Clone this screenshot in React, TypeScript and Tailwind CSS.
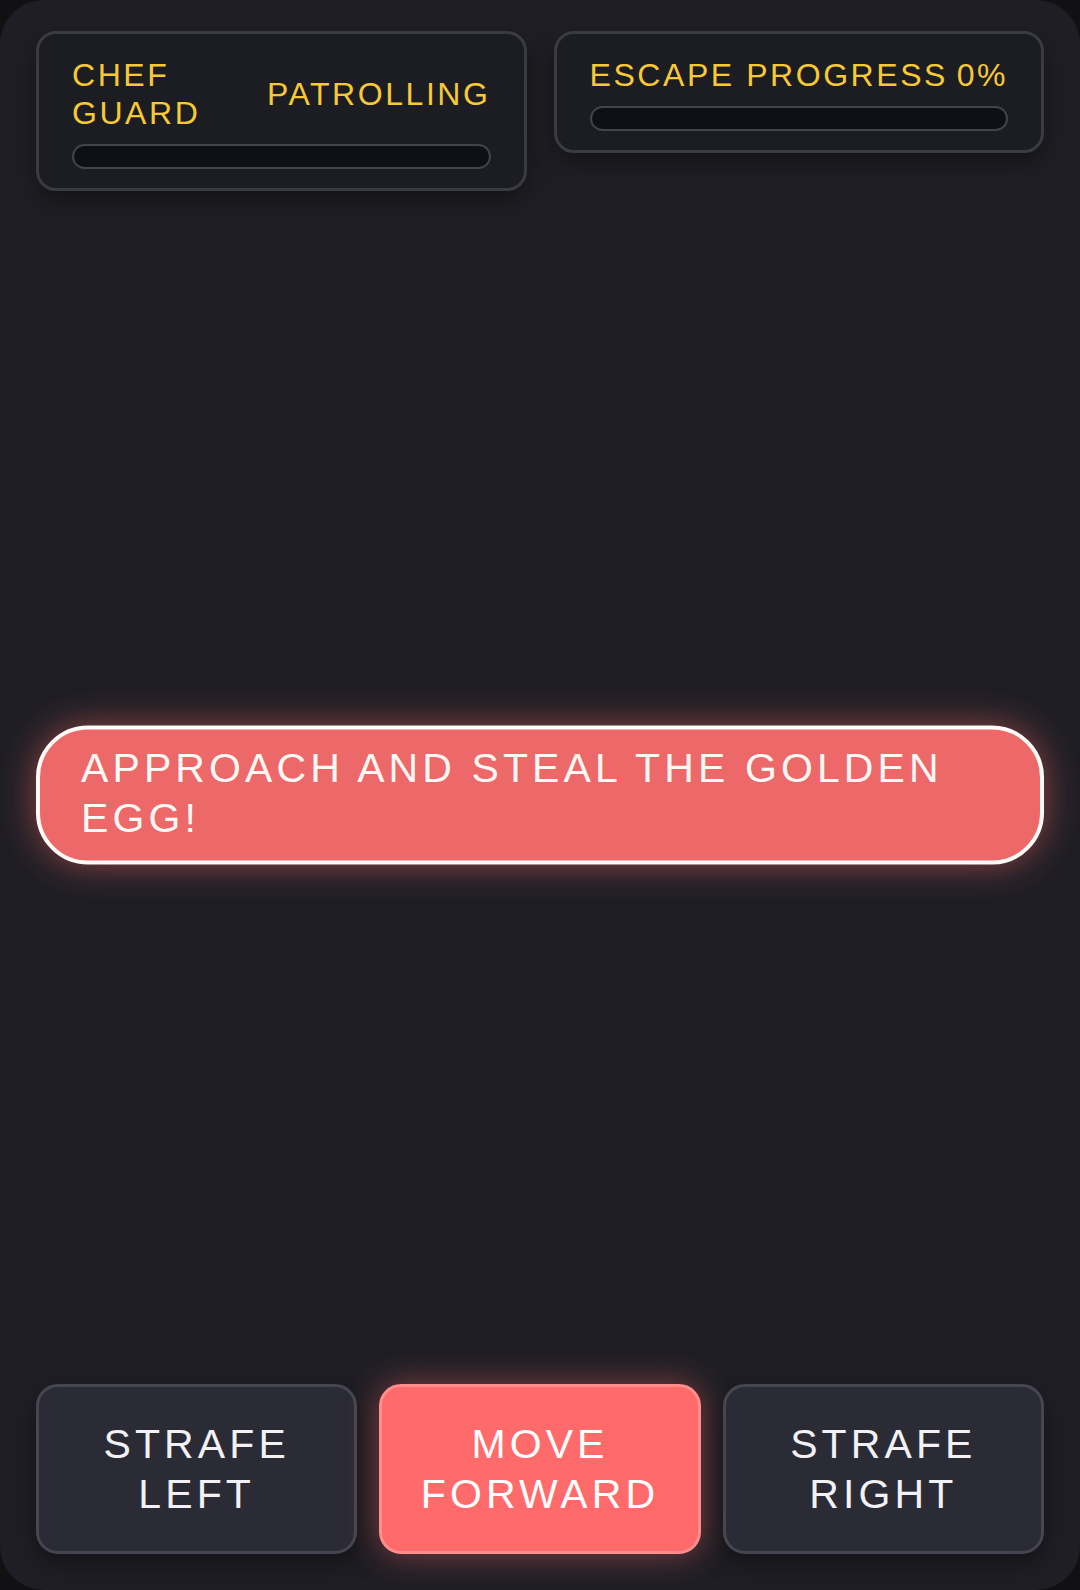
import React from "react";

function Bar() {
  return (
    <div className="h-[25px] w-full rounded-full border-2 border-[#42434c] bg-[#0f1016]" />
  );
}

function ControlButton({ label, active }: { label: string[]; active?: boolean }) {
  return (
    <button
      className={
        active
          ? "flex flex-col items-center justify-center rounded-[22px] border-[3px] border-[#ff8e8c] bg-[#ff6b6b] py-8 text-[41px] leading-[50px] tracking-[0.1em] text-white shadow-[0_0_34px_rgba(255,107,107,0.45)]"
          : "flex flex-col items-center justify-center rounded-[22px] border-[3px] border-[#45464f] bg-[#2a2b35] py-8 text-[41px] leading-[50px] tracking-[0.1em] text-[#f1f1f6] shadow-[0_10px_24px_rgba(0,0,0,0.35)]"
      }
    >
      {label.map((l) => (
        <span key={l}>{l}</span>
      ))}
    </button>
  );
}

export default function App() {
  return (
    <div
      className="min-h-[1590px] w-full bg-[#111114]"
      style={{ fontFamily: '"Liberation Sans", Arial, sans-serif' }}
    >
      <div className="relative flex h-[1590px] w-full flex-col justify-between rounded-[44px] bg-[#1e1e24] px-[36px] pb-[36px] pt-[31px]">
        <div className="grid grid-cols-2 items-start gap-[27px]">
          <div className="flex flex-col gap-3 rounded-[20px] border-[3px] border-[#393a44] bg-[#1c1d23] px-[33px] pb-[19px] pt-[22px] shadow-[0_10px_24px_rgba(0,0,0,0.35)]">
            <div className="flex items-center justify-between text-[32px] leading-[38px] tracking-[0.08em] text-[#f7c935]">
              <span className="w-[150px]">CHEF GUARD</span>
              <span>PATROLLING</span>
            </div>
            <Bar />
          </div>
          <div className="flex flex-col gap-3 rounded-[20px] border-[3px] border-[#393a44] bg-[#1c1d23] px-[33px] pb-[19px] pt-[22px] shadow-[0_10px_24px_rgba(0,0,0,0.35)]">
            <div className="flex items-center justify-between text-[32px] leading-[38px] tracking-[0.08em] text-[#f7c935]">
              <span>ESCAPE PROGRESS</span>
              <span>0%</span>
            </div>
            <Bar />
          </div>
        </div>

        <div className="absolute left-[36px] right-[36px] top-1/2 -translate-y-1/2 rounded-[52px] border-[4px] border-[#fffaf7] bg-[#ec6869] px-[41px] pb-[18px] pt-[13px] text-[41px] leading-[50px] tracking-[0.1em] text-[#fff8f4] shadow-[0_0_36px_rgba(255,110,110,0.5)]">
          APPROACH AND STEAL THE GOLDEN EGG!
        </div>

        <div className="grid grid-cols-3 gap-[22px]">
          <ControlButton label={["STRAFE", "LEFT"]} />
          <ControlButton label={["MOVE", "FORWARD"]} active />
          <ControlButton label={["STRAFE", "RIGHT"]} />
        </div>
      </div>
    </div>
  );
}
